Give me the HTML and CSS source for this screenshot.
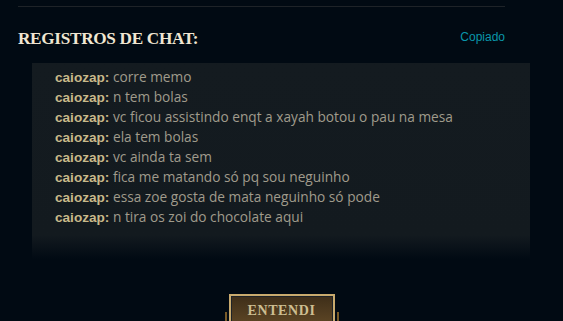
FILE: index.html
```html
<!DOCTYPE html>
<html>
<head>
<meta charset="utf-8">
<link rel="stylesheet" href="styles.css">
</head>
<body>
<div class="page">
  <div class="rule"></div>
  <div class="header">
    <h2 class="title">REGISTROS DE CHAT:</h2>
    <span class="copied">Copiado</span>
  </div>
  <div class="log">
    <div class="line"><span class="name">caiozap:</span> corre memo</div>
    <div class="line"><span class="name">caiozap:</span> n tem bolas</div>
    <div class="line"><span class="name">caiozap:</span> vc ficou assistindo enqt a xayah botou o pau na mesa</div>
    <div class="line"><span class="name">caiozap:</span> ela tem bolas</div>
    <div class="line"><span class="name">caiozap:</span> vc ainda ta sem</div>
    <div class="line"><span class="name">caiozap:</span> fica me matando só pq sou neguinho</div>
    <div class="line"><span class="name">caiozap:</span> essa zoe gosta de mata neguinho só pode</div>
    <div class="line"><span class="name">caiozap:</span> n tira os zoi do chocolate aqui</div>
  </div>
  <div class="actions">
    <button class="btn">ENTENDI</button>
  </div>
</div>
</body>
</html>
```
FILE: styles.css
```css
html, body {
  margin: 0;
  padding: 0;
  background: #010a13;
  width: 563px;
  height: 321px;
  overflow: hidden;
}
.page {
  padding: 6px 58px 0 18px;
}
.rule {
  height: 1px;
  background: #1e2328;
}
.header {
  display: flex;
  justify-content: space-between;
  align-items: center;
  margin-top: 19px;
  height: 25px;
  margin-bottom: 12px;
}
.title {
  margin: 0;
  font-family: "Liberation Serif", serif;
  font-weight: bold;
  font-size: 17.2px;
  letter-spacing: -0.3px;
  color: #f0e6d2;
}
.copied {
  font-family: "Liberation Sans", sans-serif;
  font-size: 12px;
  color: #0a96aa;
  margin-top: -3px;
}
.log {
  margin: 0 -25px 0 14px;
  height: 196px;
  padding: 4px 0 0 23px;
  background: linear-gradient(to bottom, #141b20 0, #131a1f 172px, #010a13 196px);
  font-family: "Open Sans", sans-serif;
  font-size: 13.7px;
  color: #a09b8c;
}
.line {
  height: 20px;
  line-height: 20px;
  overflow: hidden;
  white-space: nowrap;
}
.name {
  font-family: "Liberation Sans", sans-serif;
  font-size: 13.6px;
  font-weight: bold;
  color: #c8b98a;
}
.actions {
  display: flex;
  justify-content: center;
  margin: 31px 0 0 40px;
}
.btn {
  position: relative;
  width: 106px;
  height: 30px;
  box-sizing: border-box;
  border: 2px solid #c8aa6e;
  box-shadow: inset 0 0 0 1px #1e2328;
  background: linear-gradient(to bottom, #3e2e19, #5b4424);
  font-family: "Liberation Serif", serif;
  font-weight: bold;
  font-size: 14px;
  letter-spacing: 0.6px;
  color: #cdbe91;
  padding: 3px 0 0;
  text-align: center;
}
.btn::before, .btn::after {
  content: "";
  position: absolute;
  top: 16px;
  width: 2px;
  height: 12px;
  background: #785a28;
}
.btn::before { left: -6px; }
.btn::after { right: -6px; }
```
